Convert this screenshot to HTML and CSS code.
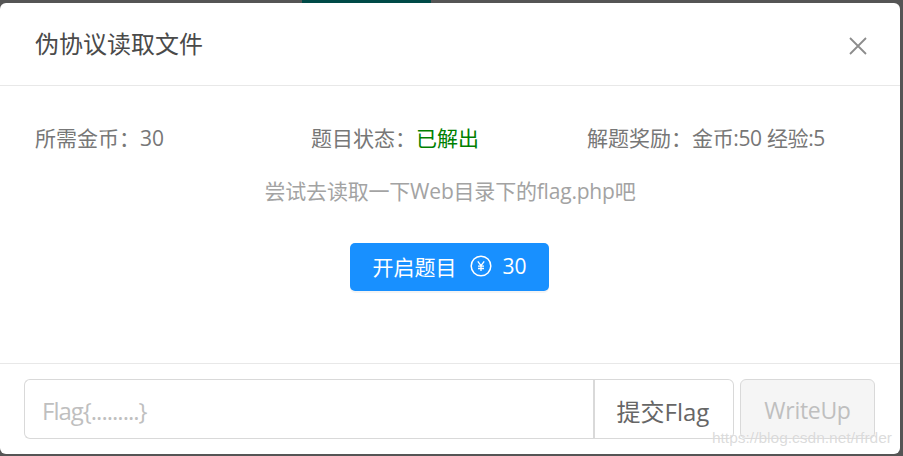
FILE: index.html
```html
<!DOCTYPE html>
<html lang="zh-CN">
<head>
    <meta charset="UTF-8">
    <meta name="viewport" content="width=device-width, initial-scale=1.0">
    <title>伪协议读取文件</title>
    <link rel="stylesheet" href="styles.css">
</head>
<body>
    <div class="backdrop-strip"><span class="backdrop-tab"></span></div>
    <div class="modal">
        <div class="modal-header">
            <h2 class="modal-title">伪协议读取文件</h2>
            <button class="modal-close" aria-label="关闭">
                <svg width="18" height="18" viewBox="0 0 18 18"><path d="M1 1L17 17M17 1L1 17" stroke="#8c8c8c" stroke-width="1.8" fill="none"/></svg>
            </button>
        </div>
        <div class="modal-body">
            <div class="info-row">
                <div class="info-item">所需金币：30</div>
                <div class="info-item">题目状态：<span class="solved">已解出</span></div>
                <div class="info-item">解题奖励：<span class="reward">金币:50 经验:5</span></div>
            </div>
            <p class="hint">尝试去读取一下Web目录下的flag.php吧</p>
            <button class="start-button">
                <span>开启题目</span>
                <svg class="coin" width="22" height="22" viewBox="0 0 22 22">
                    <circle cx="11" cy="11" r="9.8" stroke="#fff" stroke-width="1.5" fill="none"/>
                    <path d="M7.8 6.3L11 10.6L14.2 6.3M11 10.6V16M8 11.2H14M8 13.5H14" stroke="#fff" stroke-width="1.3" fill="none"/>
                </svg>
                <span>30</span>
            </button>
        </div>
        <div class="modal-footer">
            <input class="flag-input" type="text" placeholder="Flag{.........}">
            <button class="submit-button">提交Flag</button>
            <button class="writeup-button" disabled>WriteUp</button>
        </div>
        <div class="watermark">https://blog.csdn.net/rfrder</div>
    </div>
</body>
</html>
```

FILE: styles.css
```css
* {
    box-sizing: border-box;
}
body {
    margin: 0;
    height: 456px;
    overflow: hidden;
    background: #555;
    font-family: "Open Sans", "Noto Sans CJK SC", sans-serif;
    color: #666;
}
.backdrop-strip {
    height: 3px;
    padding-left: 302px;
}
.backdrop-tab {
    display: block;
    width: 129px;
    height: 3px;
    background: #004a47;
}
.modal {
    position: relative;
    display: flex;
    flex-direction: column;
    width: 900px;
    height: 451px;
    background: #fff;
    border-radius: 6px;
}
.modal-header {
    display: flex;
    align-items: center;
    justify-content: space-between;
    height: 83px;
    padding: 0 32px 0 35px;
    border-bottom: 1px solid #e8e8e8;
}
.modal-title {
    margin: 0 0 3px;
    font-size: 24px;
    font-weight: 400;
    color: #4a4a4a;
}
.modal-close {
    display: flex;
    padding: 0;
    margin-top: 4px;
    margin-right: 1px;
    border: none;
    background: none;
}
.modal-body {
    flex: 1;
    display: flex;
    flex-direction: column;
    align-items: center;
    padding: 35px 35px 0;
}
.info-row {
    display: grid;
    grid-template-columns: 276px 276px 1fr;
    width: 100%;
    font-size: 21px;
    line-height: 34px;
    color: #777;
}
.solved {
    color: #008000;
}
.reward {
    letter-spacing: -0.35px;
}
.hint {
    margin: 19px 0 0;
    font-size: 21px;
    line-height: 34px;
    letter-spacing: -0.2px;
    color: #a3a3a3;
}
.start-button {
    display: flex;
    align-items: center;
    justify-content: center;
    gap: 12px;
    width: 199px;
    height: 48px;
    margin: 35px 1px 0 0;
    padding: 0 0 2px;
    border: none;
    border-radius: 5px;
    background: #1890ff;
    box-shadow: 0 2px 0 rgba(0,0,0,0.045);
    color: #fff;
    font-family: inherit;
    font-size: 21px;
}
.coin {
    margin: 0 -2px 0 2px;
}
.modal-footer {
    display: flex;
    height: 91px;
    padding: 15px 25px 15px 24px;
    border-top: 1px solid #e8e8e8;
}
.flag-input {
    width: 569px;
    height: 60px;
    padding: 2px 17px 0;
    border: 1px solid #d9d9d9;
    border-right: none;
    border-radius: 6px 0 0 6px;
    outline: none;
    font-family: inherit;
    font-size: 24px;
}
.flag-input::placeholder {
    color: #bfbfbf;
    letter-spacing: -1px;
}
.submit-button {
    width: 141px;
    height: 60px;
    padding: 2px 2px 0 0;
    border: 1px solid #d9d9d9;
    border-left-width: 2px;
    border-radius: 0 6px 6px 0;
    background: #fff;
    color: #666;
    font-family: inherit;
    font-size: 24px;
}
.writeup-button {
    width: 135px;
    height: 60px;
    margin-left: 6px;
    padding: 2px 0 0;
    border: 1px solid #d9d9d9;
    border-radius: 6px;
    background: #f5f5f5;
    color: #bfbfbf;
    font-family: inherit;
    font-size: 23px;
    letter-spacing: -0.3px;
}
.watermark {
    position: absolute;
    right: 8px;
    bottom: 7px;
    font-family: "Liberation Sans", sans-serif;
    font-size: 15.5px;
    color: rgba(190,190,190,0.55);
    text-shadow: 0 0 1px rgba(255,255,255,0.8);
}
```
